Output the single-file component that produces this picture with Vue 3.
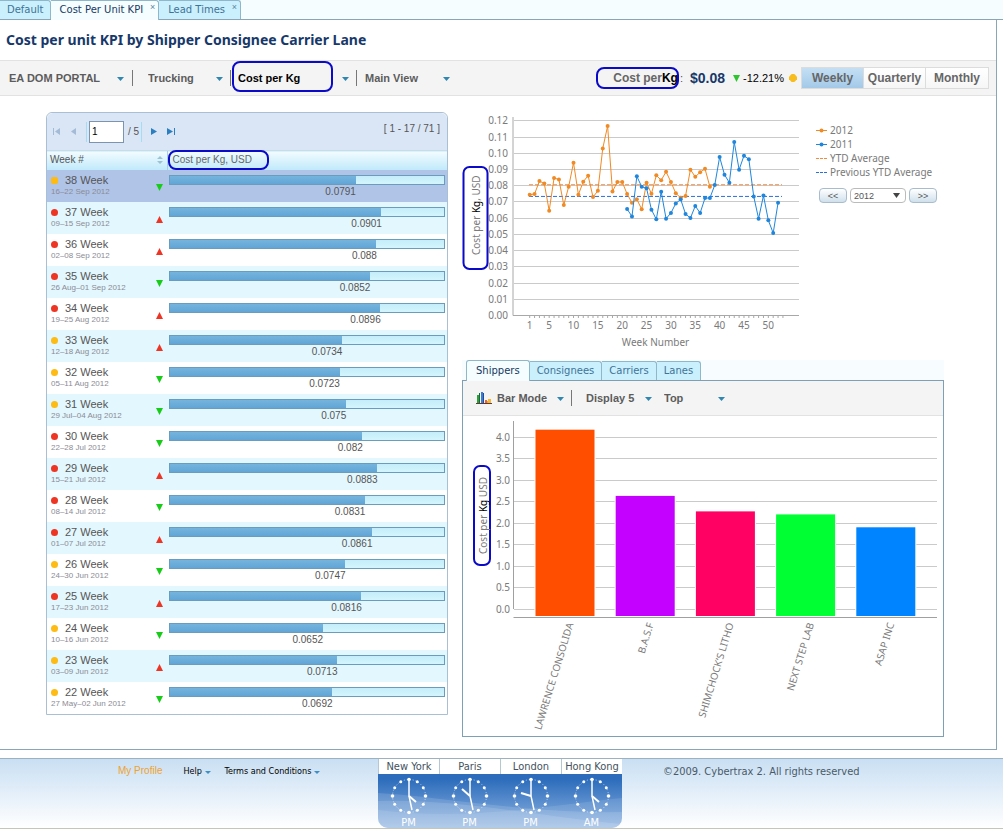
<script setup>
import { ref } from 'vue'

const pageTabs = [
  { label: 'Default', closable: false, active: false },
  { label: 'Cost Per Unit KPI', closable: true, active: true },
  { label: 'Lead Times', closable: true, active: false },
]
const periods = ['Weekly', 'Quarterly', 'Monthly']
const period = ref('Weekly')
const page = ref('1')
const year = ref('2012')

const BAR_MAX = 0.1168
const weeks = [
  [38, '16–22 Sep 2012', 0.0791, 'amber', 'down'],
  [37, '09–15 Sep 2012', 0.0901, 'red', 'up'],
  [36, '02–08 Sep 2012', 0.088, 'red', 'up'],
  [35, '26 Aug–01 Sep 2012', 0.0852, 'red', 'down'],
  [34, '19–25 Aug 2012', 0.0896, 'red', 'up'],
  [33, '12–18 Aug 2012', 0.0734, 'amber', 'up'],
  [32, '05–11 Aug 2012', 0.0723, 'amber', 'down'],
  [31, '29 Jul–04 Aug 2012', 0.075, 'amber', 'down'],
  [30, '22–28 Jul 2012', 0.082, 'red', 'down'],
  [29, '15–21 Jul 2012', 0.0883, 'red', 'up'],
  [28, '08–14 Jul 2012', 0.0831, 'red', 'down'],
  [27, '01–07 Jul 2012', 0.0861, 'red', 'up'],
  [26, '24–30 Jun 2012', 0.0747, 'amber', 'down'],
  [25, '17–23 Jun 2012', 0.0816, 'red', 'up'],
  [24, '10–16 Jun 2012', 0.0652, 'amber', 'down'],
  [23, '03–09 Jun 2012', 0.0713, 'amber', 'up'],
  [22, '27 May–02 Jun 2012', 0.0692, 'amber', 'down'],
].map(([n, dates, value, status, trend]) => ({ n, dates, value, status, trend, width: (value / BAR_MAX) * 100 + '%' }))

// Line chart scales
const lx = (week) => 529.7 + (week - 1) * 4.87
const ly = (value) => 315 - value * 1622
const lineTicks = Array.from({ length: 13 }, (_, i) => ({ label: (i / 100).toFixed(2), y: Math.round(ly(i / 100)) + 0.5 }))
const weekTicks = Array.from({ length: 53 }, (_, i) => lx(i + 1))
const weekLabels = [1, 5, 10, 15, 20, 25, 30, 35, 40, 45, 50]
const toPoints = (start, values) => values.map((v, i) => ({ x: lx(start + i), y: ly(v) }))
const series = [
  {
    name: '2012', color: '#f08a24',
    points: toPoints(1, [
      0.0742, 0.0746, 0.0826, 0.081, 0.0643, 0.0844, 0.0836, 0.0678, 0.0791, 0.0939, 0.0742, 0.0822, 0.0859, 0.0727,
      0.0766, 0.1027, 0.1165, 0.0762, 0.082, 0.082, 0.0746, 0.0692, 0.0713, 0.0652, 0.0816, 0.0747, 0.0861, 0.0831,
      0.0883, 0.082, 0.075, 0.0723, 0.0734, 0.0896, 0.0852, 0.088, 0.0901, 0.0791,
    ]),
  },
  {
    name: '2011', color: '#1f86dc',
    points: toPoints(21, [
      0.0653, 0.0608, 0.0855, 0.0791, 0.0781, 0.0649, 0.059, 0.076, 0.0594, 0.0629, 0.0688, 0.0713, 0.0623, 0.0598,
      0.0672, 0.0629, 0.0721, 0.0721, 0.0801, 0.0974, 0.0865, 0.0816, 0.1066, 0.0896, 0.0982, 0.096, 0.0731, 0.0594,
      0.0736, 0.0584, 0.0505, 0.0692,
    ]),
  },
].map((s) => ({ ...s, path: s.points.map((p) => `${p.x},${p.y}`).join(' ') }))
const averages = [
  { name: 'YTD Average', color: '#f58a3c', y: ly(0.0803) },
  { name: 'Previous YTD Average', color: '#2a6fe0', y: ly(0.0731) },
]

// Bar chart
const by = (value) => 609 - value * 43
const barTicks = [0, 0.5, 1, 1.5, 2, 2.5, 3, 3.5, 4].map((v) => ({ label: v.toFixed(1), y: Math.floor(by(v)) + 0.5 }))
const shippers = [
  ['LAWRENCE CONSOLIDA', 4.17, '#ff4e00'],
  ['B.A.S.F', 2.63, '#c400ff'],
  ['SHIMCHOCK’S LITHO', 2.27, '#ff0063'],
  ['NEXT STEP LAB', 2.2, '#00ff33'],
  ['ASAP INC', 1.9, '#0084ff'],
].map(([name, value, color], i) => ({ name, color, x: 535.5 + i * 80.2, y: by(value) }))
const panelTabs = ['Shippers', 'Consignees', 'Carriers', 'Lanes']
const panelTab = ref('Shippers')

const clocks = [
  { city: 'New York', half: 'PM', hour: [7, 6], minute: [3, 14] },
  { city: 'Paris', half: 'PM', hour: [-8, -7], minute: [3, 14] },
  { city: 'London', half: 'PM', hour: [-10, -3], minute: [3, 14] },
  { city: 'Hong Kong', half: 'AM', hour: [7, 6], minute: [3, 14] },
]
const dots = Array.from({ length: 12 }, (_, i) => ({
  x: 16.5 * Math.sin((i * Math.PI) / 6),
  y: -16.5 * Math.cos((i * Math.PI) / 6),
  r: i % 3 === 0 ? 1.8 : 1.5,
}))
</script>

<template>
  <div class="page">
    <nav class="page-tabs" aria-label="Pages">
      <div v-for="t in pageTabs" :key="t.label" class="tab" :class="{ active: t.active }">
        <a href="#">{{ t.label }}</a>
        <button v-if="t.closable" class="tab-close" :aria-label="'Close ' + t.label">×</button>
      </div>
    </nav>

    <main class="main">
      <h1>Cost per unit KPI by Shipper Consignee Carrier Lane</h1>

      <div class="toolbar">
        <label class="menu menu-portal">
          <select aria-label="Portal"><option>EA DOM PORTAL</option></select>
          <svg class="caret" viewBox="0 0 7 4"><path d="M0 0h7L3.5 4z" /></svg>
        </label>
        <i class="sep"></i>
        <label class="menu menu-mode">
          <select aria-label="Transport mode"><option>Trucking</option></select>
          <svg class="caret" viewBox="0 0 7 4"><path d="M0 0h7L3.5 4z" /></svg>
        </label>
        <i class="sep"></i>
        <label class="menu menu-kpi">
          <select aria-label="Indicator"><option>Cost per Kg</option></select>
          <svg class="caret" viewBox="0 0 7 4"><path d="M0 0h7L3.5 4z" /></svg>
          <i class="ring"></i>
        </label>
        <i class="sep"></i>
        <label class="menu menu-view">
          <select aria-label="View"><option>Main View</option></select>
          <svg class="caret" viewBox="0 0 7 4"><path d="M0 0h7L3.5 4z" /></svg>
        </label>

        <div class="summary">
          <span class="summary-name">Cost per<b>Kg</b><i class="ring"></i></span>
          <span class="colon">:</span>
          <strong>$0.08</strong>
          <svg class="tri" viewBox="0 0 7 7"><path d="M0 0h7L3.5 7z" fill="#2fc52f" /></svg>
          <span class="delta">-12.21%</span>
          <svg class="gem" viewBox="0 0 9 9"><path d="M3 0h3l3 3v3L6 9H3L0 6V3z" fill="#f8bd1c" /></svg>
        </div>
        <div class="periods" role="group" aria-label="Period">
          <button v-for="p in periods" :key="p" :class="{ on: p === period }" @click="period = p">{{ p }}</button>
        </div>
      </div>

      <div class="content">
        <section class="grid-box">
          <div class="pager">
            <button aria-label="First page" disabled><svg width="8" height="7" viewBox="0 0 8 7"><path d="M0 0h1v7H0zM7 0v7L2 3.5z" /></svg></button>
            <button aria-label="Previous page" class="prev" disabled><svg width="5" height="7" viewBox="0 0 5 7"><path d="M5 0v7L0 3.5z" /></svg></button>
            <i class="bar-sep"></i>
            <input v-model="page" type="text" aria-label="Page" />
            <span class="of">/ 5</span>
            <i class="bar-sep"></i>
            <button aria-label="Next page" class="next"><svg width="6" height="7" viewBox="0 0 6 7"><path d="M0 0v7l6-3.5z" /></svg></button>
            <button aria-label="Last page"><svg width="8" height="7" viewBox="0 0 8 7"><path d="M7 0h1v7H7zM0 0v7l6-3.5z" /></svg></button>
            <span class="range">[ 1 - 17 / 71 ]</span>
          </div>
          <table>
            <colgroup><col class="col-week" /><col /></colgroup>
            <thead>
              <tr>
                <th scope="col">
                  <span class="th-week">Week #
                    <svg width="6" height="8" viewBox="0 0 6 8"><path d="M0 3l3-3 3 3zM0 5h6L3 8z" fill="#9cc3d4" /></svg>
                  </span>
                </th>
                <th scope="col" class="th-cost">Cost per Kg, USD<i class="ring"></i></th>
              </tr>
            </thead>
            <tbody>
              <tr v-for="w in weeks" :key="w.n" :class="{ selected: w.n === 38 }">
                <td>
                  <div class="week">
                    <i class="dot" :class="w.status"></i>
                    <span class="week-name">{{ w.n }} Week</span>
                    <span class="dates">{{ w.dates }}</span>
                    <svg class="trend" viewBox="0 0 7 7">
                      <path v-if="w.trend === 'up'" d="M3.5 0L7 7H0z" fill="#ee3524" />
                      <path v-else d="M0 0h7L3.5 7z" fill="#19cc19" />
                    </svg>
                  </div>
                </td>
                <td class="cost">
                  <div class="meter"><div class="fill" :style="{ width: w.width }"></div></div>
                  <div class="value" :style="{ width: w.width }">{{ w.value }}</div>
                </td>
              </tr>
            </tbody>
          </table>
        </section>

        <section class="charts">
          <div class="trend-row">
            <svg class="line-chart" viewBox="462 112 342 240" role="img" aria-label="Cost per Kg by week">
              <g v-for="t in lineTicks" :key="t.label">
                <line x1="514" x2="799" :y1="t.y" :y2="t.y" stroke="#cacaca" />
                <text x="508" :y="t.y + 3.5" text-anchor="end">{{ t.label }}</text>
              </g>
              <path d="M513 117V315.5H799" fill="none" stroke="#a8a8a8" />
              <line v-for="x in weekTicks" :key="x" :x1="x" :x2="x" y1="316" y2="318" stroke="#a8a8a8" />
              <text v-for="n in weekLabels" :key="n" :x="lx(n)" y="329" text-anchor="middle">{{ n }}</text>
              <text x="655.5" y="346" text-anchor="middle">Week Number</text>
              <line v-for="a in averages" :key="a.name" x1="529" x2="782" :y1="a.y" :y2="a.y" :stroke="a.color" stroke-dasharray="4 2" />
              <g v-for="s in series" :key="s.name">
                <polyline :points="s.path" fill="none" :stroke="s.color" />
                <circle v-for="p in s.points" :key="p.x" :cx="p.x" :cy="p.y" r="2" :fill="s.color" />
              </g>
              <rect x="463.5" y="167" width="24" height="102" rx="6" fill="#fff" stroke="#0a0ac8" stroke-width="2" />
              <text transform="translate(480 255) rotate(-90)">Cost per <tspan class="unit">Kg</tspan>, USD</text>
            </svg>
            <div class="side">
              <ul class="legend">
                <li v-for="s in series" :key="s.name">
                  <svg width="11" height="5" viewBox="0 0 11 5"><path d="M0 2.5h11" :stroke="s.color" /><circle cx="5.5" cy="2.5" r="2" :fill="s.color" /></svg>{{ s.name }}
                </li>
                <li v-for="a in averages" :key="a.name">
                  <svg width="11" height="5" viewBox="0 0 11 5"><path d="M0 2.5h11" :stroke="a.color" stroke-dasharray="3 1" /></svg>{{ a.name }}
                </li>
              </ul>
              <div class="year-nav">
                <button aria-label="Previous year">&lt;&lt;</button>
                <label class="year">
                  <select v-model="year" aria-label="Year"><option>2012</option><option>2011</option></select>
                  <svg width="7" height="5" viewBox="0 0 7 5"><path d="M0 0h7L3.5 5z" fill="#444" /></svg>
                </label>
                <button aria-label="Next year">&gt;&gt;</button>
              </div>
            </div>
          </div>

          <div class="panel-tabs" role="tablist">
            <button v-for="t in panelTabs" :key="t" role="tab" :aria-selected="t === panelTab" :class="{ active: t === panelTab }" @click="panelTab = t">{{ t }}</button>
          </div>
          <div class="panel">
            <div class="panel-bar">
              <svg class="bar-icon" width="16" height="13" viewBox="0 0 16 13">
                <path d="M1 3h2v8H1z" fill="#2f9e3c" /><path d="M3 1h1v10H3z" fill="#176a2a" />
                <path d="M5 0h2v11H5z" fill="#3c7bd0" /><path d="M7 1h1v10H7z" fill="#1d4d98" />
                <path d="M9 8h2v3H9z" fill="#e8603c" /><path d="M11 9h2v2h-2z" fill="#f2a31c" /><path d="M12 7h3v4h-3z" fill="#f7b934" />
                <path d="M0 11h16v1H0z" fill="#5d3a3a" />
              </svg>
              <label class="menu menu-bar">
                <select aria-label="Chart mode"><option>Bar Mode</option></select>
                <svg class="caret" viewBox="0 0 7 4"><path d="M0 0h7L3.5 4z" /></svg>
              </label>
              <i class="sep"></i>
              <label class="menu menu-count">
                <select aria-label="Items displayed"><option>Display 5</option></select>
                <svg class="caret" viewBox="0 0 7 4"><path d="M0 0h7L3.5 4z" /></svg>
              </label>
              <label class="menu menu-order">
                <select aria-label="Order"><option>Top</option></select>
                <svg class="caret" viewBox="0 0 7 4"><path d="M0 0h7L3.5 4z" /></svg>
              </label>
            </div>
            <svg class="bar-chart" viewBox="463 416 480 320" role="img" aria-label="Cost per Kg by shipper">
              <g v-for="t in barTicks" :key="t.label">
                <line x1="514" x2="937" :y1="t.y" :y2="t.y" stroke="#cacaca" />
                <text x="510" :y="t.y + 3.5" text-anchor="end">{{ t.label }}</text>
              </g>
              <path d="M513.5 421V609M513.5 617.5H937" fill="none" stroke="#a0a0a0" />
              <g v-for="s in shippers" :key="s.name">
                <rect :x="s.x - 1" :y="s.y - 1" width="61" :height="618 - s.y" fill="#fff" />
                <rect :x="s.x" :y="s.y" width="59" :height="616 - s.y" :fill="s.color" />
                <text :transform="`translate(${s.x + 38} 624) rotate(-73)`" text-anchor="end">{{ s.name }}</text>
              </g>
              <rect x="474" y="466" width="16" height="99" rx="6" fill="#fff" stroke="#0a0ac8" stroke-width="2" />
              <text transform="translate(487 554) rotate(-90)">Cost per <tspan class="unit">Kg</tspan> USD</text>
            </svg>
          </div>
        </section>
      </div>
    </main>

    <footer>
      <nav class="links" aria-label="Footer">
        <a href="#" class="profile">My Profile</a>
        <a href="#">Help <svg width="6" height="3" viewBox="0 0 6 3"><path d="M0 0h6L3 3z" fill="#3d8fc4" /></svg></a>
        <a href="#">Terms and Conditions <svg width="6" height="3" viewBox="0 0 6 3"><path d="M0 0h6L3 3z" fill="#3d8fc4" /></svg></a>
      </nav>
      <div class="clocks">
        <svg class="waves" viewBox="0 0 244 54" preserveAspectRatio="none">
          <path d="M0 19C60 22 150 40 244 38V54H0z" fill="#fff" opacity=".13" />
          <path d="M0 27C80 24 170 44 244 50V54H0z" fill="#fff" opacity=".13" />
          <path d="M0 36C90 48 180 30 244 24V54H0z" fill="#fff" opacity=".1" />
        </svg>
        <div v-for="c in clocks" :key="c.city" class="clock">
          <span class="city">{{ c.city }}</span>
          <svg width="40" height="38" viewBox="-20 -19 40 38">
            <circle r="16.5" fill="none" stroke="#fff" stroke-width=".6" stroke-dasharray="1 2" />
            <circle v-for="(d, i) in dots" :key="i" :cx="d.x" :cy="d.y" :r="d.r" fill="#fff" />
            <path :d="`M0 -15V0L${c.minute[0]} ${c.minute[1]}`" fill="none" stroke="#fff" stroke-width="1.5" />
            <path :d="`M0 0L${c.hour[0]} ${c.hour[1]}`" stroke="#fff" stroke-width="2" />
          </svg>
          <span class="half">{{ c.half }}</span>
        </div>
      </div>
      <p>©2009. Cybertrax 2. All rights reserved</p>
    </footer>
  </div>
</template>

<style>
body {
  margin: 0;
  background: #fff;
}
</style>

<style scoped>
.page,
.page button,
.page input,
.page select {
  font-family: "Liberation Sans", Arial, sans-serif;
}
.page {
  font-size: 11px;
  color: #555;
}
* {
  box-sizing: border-box;
}
button {
  padding: 0;
  border: 0;
  background: none;
  color: inherit;
}
a {
  color: inherit;
  text-decoration: none;
}
svg {
  display: block;
}
.ring {
  position: absolute;
  border: 2px solid #0a0ac8;
  border-radius: 8px;
  pointer-events: none;
}

/* Page tabs */
.page-tabs {
  display: flex;
  height: 20px;
  background: #f5fdff;
  border-bottom: 1px solid #8aa5b5;
}
.tab {
  position: relative;
  display: flex;
  height: 19px;
  padding: 0 15px 0 9px;
  border: 1px solid #8fb6c9;
  border-left: 0;
  border-bottom: 0;
  border-radius: 0 3px 0 0;
  background: #caf0fd;
  color: #3f7398;
  font: 10px/18px "DejaVu Sans", Verdana, sans-serif;
}
.tab:first-child {
  padding: 0 6px 0 7px;
}
.tab.active {
  height: 20px;
  background: #f5fdff;
  color: #163a63;
}
.tab-close {
  position: absolute;
  top: 0;
  right: 3px;
  font-size: 9px;
  line-height: 12px;
  color: #5c87a0;
}

.main {
  margin-right: 6px;
  border-right: 1px solid #8aa5b5;
  border-bottom: 1px solid #8aa5b5;
}
h1 {
  margin: 0;
  padding: 0 6px;
  font: bold 14px/40px "Noto Sans", sans-serif;
  color: #17386a;
}

/* Toolbars */
.toolbar {
  display: flex;
  align-items: center;
  height: 36px;
  padding: 0 7px 0 9px;
  background: #f4f4f4;
  border-top: 1px solid #e2e2e2;
  border-bottom: 1px solid #e2e2e2;
}
.menu {
  position: relative;
  display: block;
}
.menu select {
  display: block;
  width: 100%;
  height: 20px;
  padding: 0;
  border: 0;
  appearance: none;
  background: transparent;
  color: #5c5c5c;
  font-size: 11px;
  font-weight: bold;
}
.caret {
  position: absolute;
  top: 9px;
  right: 0;
  width: 7px;
  height: 4px;
  fill: #2f86ae;
  pointer-events: none;
}
.sep {
  width: 1px;
  height: 16px;
  background: #777;
}
.menu-portal {
  width: 115px;
  margin-right: 8px;
}
.menu-mode {
  width: 75px;
  margin: 0 7px 0 15px;
}
.menu-kpi {
  width: 111px;
  margin: 0 7px;
}
.menu-kpi select {
  color: #000;
}
.menu-kpi .ring {
  inset: -7px 16px -4px -6px;
}
.menu-view {
  width: 85px;
  margin-left: 8px;
}
.summary {
  display: flex;
  align-items: center;
  margin-left: auto;
}
.summary-name {
  position: relative;
  padding: 4px 0 4px 17px;
  font-size: 12px;
  font-weight: bold;
  color: #666;
}
.summary-name b {
  color: #000;
}
.summary-name .ring {
  inset: 0 -1px 0 0;
}
.colon {
  margin: 0 7px 0 2px;
}
.summary strong {
  font-size: 14px;
  color: #17386a;
}
.tri {
  width: 7px;
  height: 7px;
  margin: 0 3px 0 8px;
}
.delta {
  color: #000;
}
.gem {
  width: 8px;
  height: 8px;
  margin: 0 4px 0 5px;
}
.periods {
  display: flex;
  border: 1px solid #dcdcdc;
}
.periods button {
  width: 62px;
  height: 20px;
  background: linear-gradient(#fff, #f6f6f6);
  border-right: 1px solid #dcdcdc;
  font-size: 12px;
  font-weight: bold;
  color: #666;
}
.periods button:last-child {
  border-right: 0;
}
.periods button.on {
  background: linear-gradient(#c4dff4, #a3c9e8);
}

.content {
  display: grid;
  grid-template-columns: 402fr 482fr;
  align-items: start;
  gap: 14px;
  padding: 16px 52px 12px 46px;
}

/* Week grid */
.grid-box {
  border: 1px solid #a9bfd3;
  border-radius: 6px 6px 0 0;
}
.pager {
  display: flex;
  align-items: center;
  height: 37px;
  padding: 0 7px 0 6px;
  background: #dae6f5;
  border-radius: 6px 6px 0 0;
  font-size: 10px;
}
.pager button {
  fill: #2a7fc0;
}
.pager button:disabled {
  fill: #a3bbd6;
}
.pager .prev {
  margin: 0 10px 0 10px;
}
.pager .next {
  margin: 0 10px 0 9px;
}
.bar-sep {
  width: 1px;
  height: 20px;
  background: #a4dcf2;
}
.pager input {
  width: 35px;
  height: 22px;
  margin: 0 4px 0 2px;
  padding: 0 2px;
  border: 1px solid #7a95ad;
  background: #fff;
  font-size: 10px;
}
.of {
  margin-right: 2px;
}
.range {
  align-self: flex-start;
  margin-left: auto;
  line-height: 32px;
}
table {
  width: 100%;
  table-layout: fixed;
  border-collapse: collapse;
}
.col-week {
  width: 120px;
}
th,
td {
  padding: 0;
  text-align: left;
  vertical-align: top;
}
th {
  position: relative;
  height: 19px;
  padding: 0 4px 0 3px;
  background: linear-gradient(#f2fcff, #bfe9fa);
  border-top: 1px solid #c9dbe6;
  font-size: 10px;
  font-weight: normal;
  line-height: 18px;
}
.th-week {
  display: flex;
  align-items: center;
  justify-content: space-between;
}
.th-cost {
  padding-left: 5px;
  border-left: 1px solid #a9cfe0;
  color: #666;
}
.th-cost .ring {
  width: 101px;
  inset: -1px auto 0 0;
}
tbody tr {
  height: 32px;
}
tbody tr:nth-child(even) {
  background: #e3f7fe;
}
tbody tr.selected {
  background: #b0c4e8;
}
.week {
  display: grid;
  grid-template-columns: 14px 1fr 7px;
  align-items: center;
  padding: 4px 4px 0;
}
.dot {
  width: 7px;
  height: 7px;
  border-radius: 50%;
}
.dot.red {
  background: #ee3524;
}
.dot.amber {
  background: #fdbb13;
}
.selected .dot {
  border-radius: 2px;
}
.week-name {
  line-height: 13px;
}
.dates {
  grid-area: 2 / 1 / 3 / 3;
  font-size: 8px;
  line-height: 10px;
  color: #8b8b95;
}
.trend {
  grid-area: 1 / 3 / 3 / 4;
  width: 7px;
  height: 7px;
  margin-top: 4px;
}
.cost {
  padding: 5px 2px 0 2px;
}
.meter {
  height: 10px;
  border: 1px solid #6a9cbd;
  background: linear-gradient(#c4edfa, #d4f5fd);
}
.fill {
  height: 100%;
  background: linear-gradient(#74b4de, #62a5d6);
}
.value {
  font-size: 10px;
  line-height: 13px;
  text-align: right;
}

/* Charts */
.charts {
  min-width: 0;
}
.line-chart text,
.bar-chart text,
.legend {
  font-family: "Noto Sans", sans-serif;
  font-size: 10px;
  fill: #7a7a7a;
  color: #7a7a7a;
}
.line-chart .unit,
.bar-chart .unit {
  fill: #000;
}
.trend-row {
  display: flex;
  gap: 12px;
  height: 248px;
}
.line-chart {
  flex: 0 1 342px;
  height: 240px;
}
.legend {
  margin: 11px 0 9px;
  padding: 0;
  list-style: none;
  line-height: 14px;
  white-space: nowrap;
}
.legend li {
  display: flex;
  align-items: center;
  gap: 3px;
}
.year-nav {
  display: flex;
  gap: 3px;
  padding-left: 3px;
}
.year-nav button {
  width: 28px;
  height: 15px;
  border: 1px solid #a8bccb;
  border-radius: 4px;
  background: linear-gradient(#fff, #cfe0ec);
  font-size: 9px;
  line-height: 12px;
}
.year {
  position: relative;
}
.year select {
  display: block;
  width: 56px;
  height: 15px;
  padding: 0 3px;
  border: 1px solid #bbb;
  border-radius: 4px;
  appearance: none;
  background: #fff;
  color: #555;
  font-size: 9px;
}
.year svg {
  position: absolute;
  top: 5px;
  right: 6px;
  pointer-events: none;
}
.panel-tabs {
  display: flex;
  align-items: flex-end;
  height: 20px;
  padding-left: 4px;
  background: #f7fdff;
}
.panel-tabs button {
  height: 19px;
  padding: 0 7px;
  border: 1px solid #8fb6c9;
  border-left: 0;
  border-bottom: 0;
  border-radius: 0 3px 0 0;
  background: #caf0fd;
  color: #3f7398;
  font: 10px/18px "DejaVu Sans", Verdana, sans-serif;
}
.panel-tabs button.active {
  position: relative;
  height: 21px;
  margin-bottom: -1px;
  padding: 0 9px;
  border-left: 1px solid #8fb6c9;
  border-radius: 3px 3px 0 0;
  background: #f5fdff;
  color: #163a63;
}
.panel {
  border: 1px solid #7f9fb5;
}
.panel-bar {
  display: flex;
  align-items: center;
  height: 35px;
  padding-left: 13px;
  background: #f4f4f4;
  border-bottom: 1px solid #e2e2e2;
}
.menu-bar {
  width: 67px;
  margin: 0 7px 0 5px;
}
.menu-count {
  width: 66px;
  margin: 0 12px 0 14px;
}
.menu-order {
  width: 61px;
}
.bar-chart {
  width: 100%;
}

/* Footer */
footer {
  display: flex;
  height: 71px;
  margin-top: 8px;
  border-top: 1px solid #9cb2bf;
  border-bottom: 1px solid #c5c5ba;
  background: linear-gradient(#c9dff3, #fff);
  font-family: "DejaVu Sans Condensed", "DejaVu Sans", sans-serif;
}
.links {
  display: flex;
  gap: 14px;
  width: 378px;
  padding: 5px 0 0 118px;
  font-size: 9px;
  line-height: 14px;
  white-space: nowrap;
  color: #000;
}
.links svg {
  display: inline-block;
}
.profile {
  margin-right: 7px;
  font: 10px/14px "Liberation Sans", Arial, sans-serif;
  color: #f0a22c;
}
.clocks {
  position: relative;
  display: flex;
  width: 244px;
  overflow: hidden;
  border-radius: 0 0 10px 10px;
  background: linear-gradient(#2c6cbb 20px, #8fb4e2);
}
.waves {
  position: absolute;
  inset: 15px 0 0;
  width: 100%;
  height: 54px;
}
.clock {
  position: relative;
  display: flex;
  flex: 1;
  flex-direction: column;
  align-items: center;
}
.clock > * {
  flex-shrink: 0;
}
.city {
  align-self: stretch;
  height: 15px;
  background: #fff;
  border-left: 1px solid #b5c7d3;
  color: #44525e;
  text-align: center;
  line-height: 16px;
  white-space: nowrap;
}
.clock svg {
  margin-top: 3px;
}
.half {
  line-height: 16px;
  color: #fff;
}
footer p {
  margin: 0 0 0 41px;
  line-height: 26px;
  color: #4a5a68;
}
</style>
